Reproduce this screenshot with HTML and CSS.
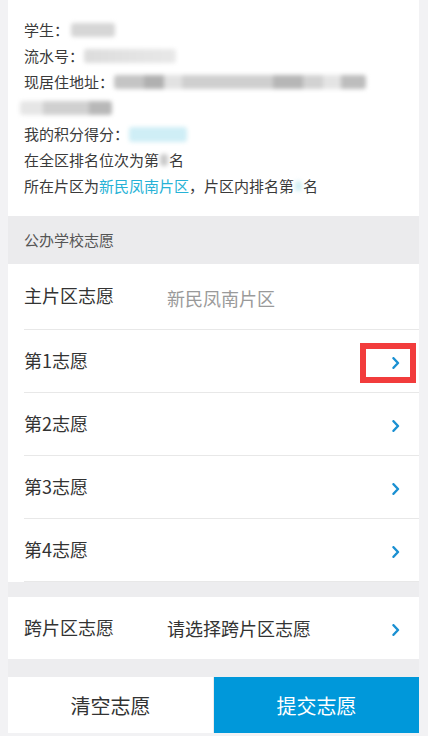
FILE: index.html
```html
<!DOCTYPE html>
<html lang="zh-CN">
<head>
<meta charset="utf-8">
<title>志愿填报</title>
<link rel="stylesheet" href="styles.css">
</head>
<body>
<div class="panel">
  <section class="info">
    <div class="line">学生：<span class="blur b-name"></span></div>
    <div class="line">流水号：<span class="blur b-serial"></span></div>
    <div class="line">现居住地址：<span class="blur b-addr"></span></div>
    <div class="line cont"><span class="blur b-addr2"></span></div>
    <div class="line">我的积分得分：<span class="blur b-score"></span></div>
    <div class="line">在全区排名位次为第<span class="blur b-rank"></span>名</div>
    <div class="line">所在片区为<span class="link">新民凤南片区</span>，片区内排名第<span class="blur b-rank2"></span>名</div>
  </section>

  <div class="group-title">公办学校志愿</div>

  <div class="row row-main">
    <span class="label">主片区志愿</span>
    <span class="value muted">新民凤南片区</span>
  </div>
  <div class="row">
    <span class="label">第1志愿</span>
    <span class="value"></span>
    <span class="arrow-wrap">
      <svg class="arrow" viewBox="0 0 8 12" width="8" height="12"><path d="M1.5 1.2 L6 6 L1.5 10.8" fill="none" stroke="#1a90d2" stroke-width="2.4" stroke-linecap="round" stroke-linejoin="round"/></svg>
      <span class="highlight"></span>
    </span>
  </div>
  <div class="row">
    <span class="label">第2志愿</span>
    <span class="value"></span>
    <span class="arrow-wrap"><svg class="arrow" viewBox="0 0 8 12" width="8" height="12"><path d="M1.5 1.2 L6 6 L1.5 10.8" fill="none" stroke="#1a90d2" stroke-width="2.4" stroke-linecap="round" stroke-linejoin="round"/></svg></span>
  </div>
  <div class="row">
    <span class="label">第3志愿</span>
    <span class="value"></span>
    <span class="arrow-wrap"><svg class="arrow" viewBox="0 0 8 12" width="8" height="12"><path d="M1.5 1.2 L6 6 L1.5 10.8" fill="none" stroke="#1a90d2" stroke-width="2.4" stroke-linecap="round" stroke-linejoin="round"/></svg></span>
  </div>
  <div class="row">
    <span class="label">第4志愿</span>
    <span class="value"></span>
    <span class="arrow-wrap"><svg class="arrow" viewBox="0 0 8 12" width="8" height="12"><path d="M1.5 1.2 L6 6 L1.5 10.8" fill="none" stroke="#1a90d2" stroke-width="2.4" stroke-linecap="round" stroke-linejoin="round"/></svg></span>
  </div>

  <div class="gap gap-1"></div>

  <div class="row row-cross">
    <span class="label">跨片区志愿</span>
    <span class="value dark">请选择跨片区志愿</span>
    <span class="arrow-wrap"><svg class="arrow" viewBox="0 0 8 12" width="8" height="12"><path d="M1.5 1.2 L6 6 L1.5 10.8" fill="none" stroke="#1a90d2" stroke-width="2.4" stroke-linecap="round" stroke-linejoin="round"/></svg></span>
  </div>

  <div class="gap gap-2"></div>

  <div class="actions">
    <button class="btn btn-clear">清空志愿</button>
    <button class="btn btn-submit">提交志愿</button>
  </div>
</div>
</body>
</html>
```

FILE: styles.css
```css
* { box-sizing: border-box; }
html, body {
  margin: 0;
  padding: 0;
  background: #f2f2f4;
  font-family: "Noto Sans CJK SC", "Noto Sans", sans-serif;
  color: #333;
}
.panel {
  margin-left: 8px;
  width: 411px;
  height: 733px;
  background: #fff;
  display: flex;
  flex-direction: column;
}
.info {
  padding: 17px 0 17px 16px;
  font-size: 15px;
  color: #3a3a3a;
}
.line {
  height: 26px;
  line-height: 26px;
  display: flex;
  align-items: center;
  white-space: nowrap;
}
.link { color: #27b2d6; }
.blur {
  display: inline-block;
  height: 14px;
  border-radius: 3px;
  filter: blur(2px);
  background: #d0d0d0;
}
.b-name { width: 44px; margin-left: 2px; background: #d6d6d6; }
.b-serial { width: 92px; background: linear-gradient(90deg, #dcdcdc, #e4e4e4 60%, #e8e8e8); }
.b-addr {
  width: 252px;
  background: linear-gradient(90deg, #c4c4c4 0 12%, #b0b0b0 12% 20%, #e2e2e2 20% 27%, #cfcfcf 27% 63%, #b6b6b6 63% 75%, #d2d2d2 75% 83%, #e4e4e4 83% 90%, #bdbdbd 90% 100%);
}
.cont { padding-left: 0; margin-left: -4px; }
.b-addr2 { width: 92px; background: linear-gradient(90deg, #e6e6e6 0 25%, #d0d0d0 25% 75%, #b8b8b8 75%); }
.b-score { width: 58px; background: #cfeef6; height: 15px; }
.b-rank { width: 8px; height: 12px; background: #cacaca; margin: 0 1px; }
.b-rank2 { width: 7px; height: 10px; background: #cfeef4; margin: 0 1px; }

.group-title {
  height: 48px;
  line-height: 48px;
  padding-left: 16px;
  background: #ebebed;
  font-size: 15px;
  color: #555;
}
.row {
  height: 63px;
  margin-left: 16px;
  border-bottom: 1px solid #e8e8e8;
  display: flex;
  align-items: flex-start;
  padding-top: 18px;
  font-size: 18px;
  position: relative;
}
.row-main { height: 66px; padding-top: 19px; }
.row-cross { height: 62px; border-bottom: none; }
.label {
  width: 143px;
  line-height: 24px;
  color: #333;
  flex: none;
}
.value {
  flex: 1;
  line-height: 24px;
  padding-top: 2px;
}
.value.muted { color: #9a9a9a; padding-top: 3px; }
.value.dark { color: #333; padding-top: 1px; }
.arrow-wrap {
  position: relative;
  width: 8px;
  margin-right: 19px;
  padding-top: 9px;
  display: flex;
}
.arrow { display: block; }
.highlight {
  position: absolute;
  left: -32px;
  top: -5px;
  width: 56px;
  height: 40px;
  border: 6px solid #f23c3c;
}
.gap { background: #ededef; flex: none; }
.gap-1 { height: 15px; }
.gap-2 { height: 18px; }
.actions {
  display: flex;
  height: 56px;
  gap: 1px;
  background: #ececec;
}
.btn {
  flex: 1;
  border: none;
  margin: 0;
  font-family: "Noto Sans CJK SC", sans-serif;
  font-size: 20px;
  cursor: pointer;
}
.btn-clear { background: #fff; color: #333; }
.btn-submit { background: #0098da; color: #fff; }
```
